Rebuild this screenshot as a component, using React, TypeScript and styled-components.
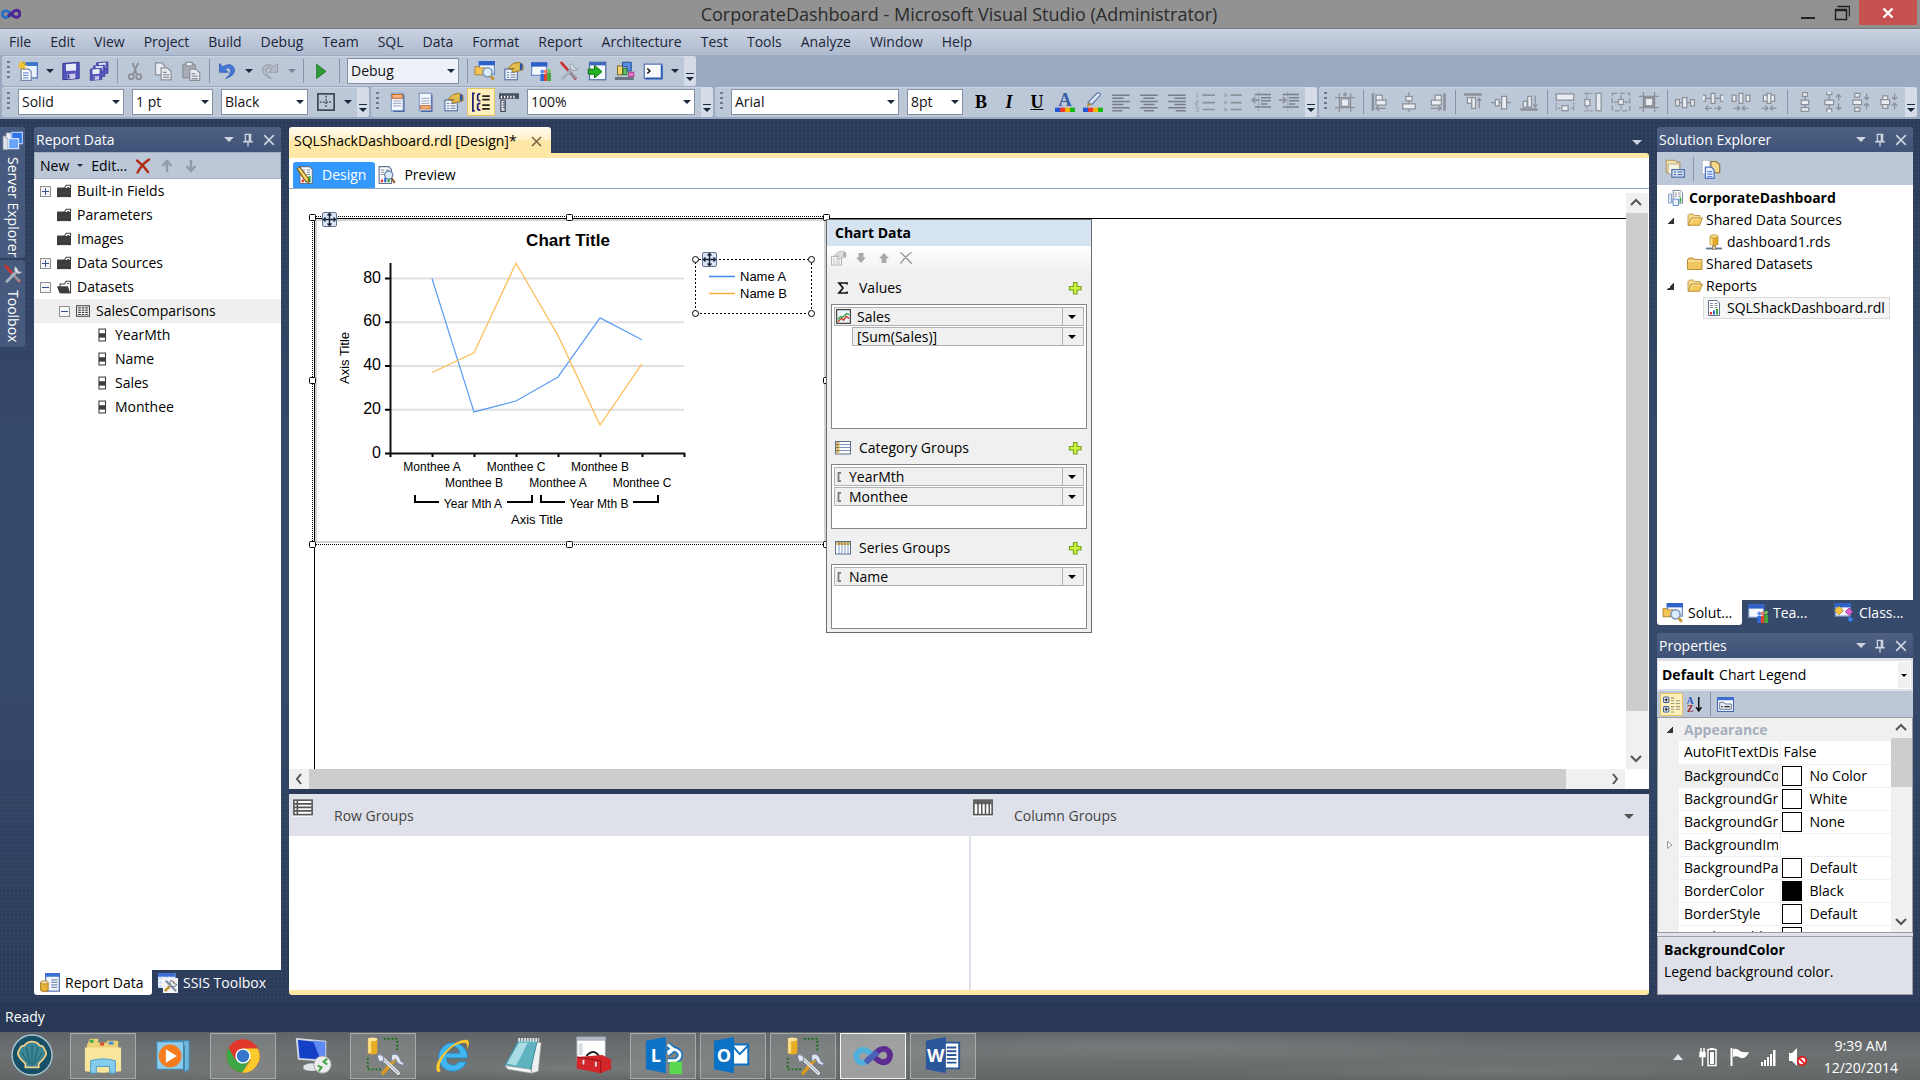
import React from "react";
import styled, { createGlobalStyle, css } from "styled-components";

const UI = `"Open Sans", "Noto Sans", sans-serif`;
const ARIAL = `"Liberation Sans", Arial, sans-serif`;

const Global = createGlobalStyle`
  * { box-sizing: border-box; }
  body { margin: 0; font-family: ${UI}; font-size: 14px; line-height: 20px; color: #000; }
  button, select, input { font: inherit; color: inherit; }
  button { border: 0; background: none; padding: 0; }
  ul { list-style: none; margin: 0; padding: 0; }
  svg { display: block; flex: none; }
`;

/* ---------- icons (16 unit grid) ---------- */

const G = "#8b9099";
const L = "#e9ecf1";

const windowShape = (
  <>
    <rect x="3.5" y="0.5" width="12" height="10" fill="#f4f8ff" stroke="#6f8fc6" />
    <rect x="3" y="0" width="13" height="3.5" fill="#2f62c9" />
  </>
);

const folderOpen = (
  <>
    <path d="M1 13V3.5L2.5 2h3.700L7.500 3.500H13V6" fill="#f3dc92" stroke="#b58c35" strokeWidth=".8" />
    <path d="M1 13.300 4.500 6h11L12.500 13.300z" fill="#f5c95c" stroke="#a97b21" strokeWidth=".8" />
    <path d="M3 12 5.500 7h8" fill="none" stroke="#fdeebb" strokeWidth=".8" />
  </>
);

const darkFolder = (
  <>
    <path d="M0 15V4h16v11z" fill="#3d3d3d" />
    <path d="M8.500 4.500 10.500 1.500h5v3" fill="#fff" stroke="#3d3d3d" strokeWidth="1.200" />
    <path d="M11.500 4h2.500" stroke="#3d3d3d" />
  </>
);

const crossedTools = (
  <>
    <path d="M2 1.500 13 14" stroke="#c33" strokeWidth="2.200" strokeLinecap="round" />
    <path d="M7 7.500 13.500 14" stroke="#8c94a2" strokeWidth="2" />
    <path d="M3 14 11 6" stroke="#a7afbb" strokeWidth="2.200" strokeLinecap="round" />
    <path d="M10 2a3.300 3.300 0 1 0 5 4.500L12.500 6 11.500 4z" fill="#dfe4ea" stroke="#8c94a2" strokeWidth=".7" />
  </>
);

const people = (
  <>
    <path d="M7.500 16v-5q1.500-2 3 0v5z" fill="#2f6be0" />
    <circle cx="9" cy="8.300" r="1.500" fill="#5b91f2" />
    <path d="M10.300 16v-5q1.500-2 3 0v5z" fill="#e2452f" />
    <circle cx="11.800" cy="8.300" r="1.500" fill="#f0705c" />
    <path d="M13 16v-6q1.500-2 3 0v6z" fill="#46a83b" />
    <circle cx="14.500" cy="7.600" r="1.400" fill="#6cc95d" />
  </>
);

const colorBars = (
  <>
    <rect x="0" y="12.500" width="4" height="3.500" fill="#2355d4" />
    <rect x="4" y="12.500" width="4" height="3.500" fill="#ee3a34" />
    <rect x="8" y="12.500" width="4" height="3.500" fill="#f6b400" />
    <rect x="12" y="12.500" width="4" height="3.500" fill="#13b813" />
  </>
);

const page = (
  <>
    <rect x="3.500" y="1" width="9.500" height="14" fill="#f6f9ff" stroke="#8aa0c8" />
    <path d="M5 5h6.500M5 7h6.500M5 9h6.500M5 11h6.500" stroke="#a9b4c9" />
    <path d="M13.500 2v13.500H5" fill="none" stroke="#4d689e" />
  </>
);

const floppy = (
  <>
    <path d="M1.500 2 14.500 1v13l-13 1z" fill="#5355bd" stroke="#33358f" strokeWidth=".8" />
    <path d="M4 2.500 12 2v5.500L4 8z" fill="#e9edf8" />
    <path d="M5 10.500 11.500 10v4L5 14.500z" fill="#c9cbe8" />
    <path d="M6 11v3" stroke="#33358f" strokeWidth="1.500" />
  </>
);

const reportPage = (
  <>
    <path d="M2.500.500h8.500L13.500 3v12.500h-11z" fill="#fff" stroke="#63738f" />
    <path d="M4 3.500h3M4 5.500h3M4 7.500h3M8.500 3.500h3M8.500 5.500h3M8.500 7.500h3" stroke="#7f8896" strokeWidth=".9" />
    <rect x="4" y="12" width="2" height="2.500" fill="#e33" />
    <rect x="7" y="10.500" width="2" height="4" fill="#2a62e0" />
    <rect x="10" y="9" width="2" height="5.500" fill="#2ca73a" />
  </>
);

const handCard = (
  <>
    <rect x="1.500" y="6.500" width="10" height="8.500" fill="#f5f8fd" stroke="#5e79a8" />
    <path d="M3 9h2M6 9h4M3 11h2M6 11h4M3 13h2M6 13h4" stroke="#7f92b4" />
    <path d="M4 6 8 2l5-1 3 2v4l-4 1-4 1-1-1.500L9 6z" fill="#e2bd4e" stroke="#a07922" strokeWidth=".8" />
    <path d="M14.500 2v5" stroke="#2a4fa8" strokeWidth="2" />
  </>
);

const icons: Record<string, React.ReactNode> = {
  newItem: (
    <>
      <rect x="4.500" y="1.500" width="11" height="12" fill="#eaf1fd" stroke="#5879b6" />
      <rect x="4" y="1" width="12" height="3" fill="#3c74cf" />
      <path d="M2.500 6.500h6L10.500 8.500v7h-8z" fill="#fff" stroke="#7588ab" />
      <path d="M4 9.500h4.500M4 11.500h4.500M4 13.500h4.500" stroke="#6d93d8" />
      <path d="M3.500 0v7M0 3.500h7M1 1l5 5M6 1 1 6" stroke="#f2c224" strokeWidth="1.200" />
    </>
  ),
  save: floppy,
  saveAll: (
    <>
      <g transform="translate(5 0) scale(.7)">{floppy}</g>
      <g transform="translate(2.500 2.500) scale(.7)">{floppy}</g>
      <g transform="translate(0 5) scale(.7)">{floppy}</g>
    </>
  ),
  cut: (
    <g stroke={G} fill="none" strokeWidth="1.500">
      <path d="M6 1.500 9.500 11M10.500 1.500 6.500 11" />
      <circle cx="5" cy="12.500" r="2" />
      <circle cx="11" cy="12.500" r="2" />
    </g>
  ),
  copy: (
    <g stroke={G} fill={L}>
      <path d="M2 1.500h5l2.500 2.500v7H2z" />
      <path d="M6.500 5.500h5l3 3v6.500h-8z" />
      <path d="M8 9h3M8 11h5M8 13h5" />
    </g>
  ),
  paste: (
    <g stroke={G} fill="#a6abb5">
      <rect x="1.500" y="2.500" width="10" height="11" rx="1" />
      <rect x="4" y="1" width="5" height="3" fill={L} />
      <path d="M7 6.500h5l3 3v6H7z" fill={L} />
      <path d="M8.500 10h3M8.500 12h5M8.500 14h5" />
    </g>
  ),
  undo: (
    <path d="M2 2v7h7L6.500 6.500Q10 4 11 7.500 11 11 7 14 14.500 11.500 14 6.500 12 .500 4.500 4.500z" fill="#4478d8" stroke="#2a58b0" strokeWidth=".6" />
  ),
  redo: (
    <path d="M14 2v7H7L9.500 6.500Q6 4 5 7.500 5 11 9 14 1.500 11.500 2 6.500 4 .500 11.500 4.500z" fill="#b4bac5" stroke={G} strokeWidth=".6" />
  ),
  play: <path d="M4.500 2.500 12 8.300 4.500 14z" fill="#2f9a35" stroke="#1c7423" strokeWidth=".6" />,
  find: (
    <>
      {windowShape}
      <path d="M0 4.500h3l1 1h4V11H0z" fill="#f3c557" stroke="#a97b21" strokeWidth=".7" />
      <circle cx="10" cy="9" r="3.700" fill="#d9ecfb" stroke="#7c93b5" strokeWidth="1.200" />
      <path d="M12.500 12 15 15" stroke="#c8963a" strokeWidth="2.200" />
    </>
  ),
  properties: handCard,
  propertiesGray: <g style={{ filter: "grayscale(1)" }} opacity=".5">{handCard}</g>,
  team: (
    <>
      <g transform="translate(-3 1)">{windowShape}</g>
      {people}
    </>
  ),
  tools: crossedTools,
  go: (
    <>
      <rect x="2" y="1" width="13" height="14" fill="#f4f7fc" stroke="#5670a8" />
      <rect x="2" y="1" width="13" height="2.500" fill="#3c68bf" />
      <path d="M1 6.500h5V3.500L12 8.500 6 13.500v-3H1z" fill="#23b123" stroke="#0e7210" strokeWidth=".8" />
    </>
  ),
  blocks: (
    <>
      <rect x="2" y="4" width="4" height="7" fill="#f0d473" stroke="#7c6a1d" strokeWidth=".8" />
      <path d="M6 1h7v7h-3.500V4.500H6z" fill="#5a8fe6" stroke="#274d95" strokeWidth=".8" />
      <rect x="6.500" y="6" width="3" height="5" fill="#64c46a" stroke="#2c7c31" strokeWidth=".8" />
      <rect x="11" y="9" width="4" height="3.500" fill="#e879cb" stroke="#a93c8c" strokeWidth=".8" />
      <path d="M0 14h15" stroke="#6b7485" strokeWidth="2.500" />
    </>
  ),
  command: (
    <>
      <rect x="1" y="2.500" width="14" height="11.500" fill="#f8fafe" stroke="#5b78b2" />
      <path d="M15 3v11H2" fill="none" stroke="#2f5fb5" strokeWidth="1.600" />
      <path d="M3.500 6 5.500 8 3.500 10" fill="none" stroke="#111" strokeWidth="1.200" />
    </>
  ),
  border: (
    <>
      <rect x="1.500" y="1.500" width="13" height="13" fill="none" stroke="#39404d" strokeWidth="1.300" />
      <path d="M8 3v10M3 8h10" stroke="#39404d" strokeDasharray="1.500 1" />
    </>
  ),
  pageHeader: (
    <>
      {page}
      <rect x="4" y="2" width="8.500" height="3" fill="#f8b684" stroke="#c96a24" strokeWidth=".8" />
    </>
  ),
  pageFooter: (
    <>
      {page}
      <rect x="4.500" y="11" width="7.500" height="2.500" fill="#f8b684" stroke="#c96a24" strokeWidth=".8" />
    </>
  ),
  grouping: (
    <g fill="none" stroke="#241f77" strokeWidth="1.400">
      <path d="M3 1H1.500v14H3" />
      <path d="M7.500 1.500Q4.500 1.500 5.500 4.500 4.500 7 7.500 7M7.500 9Q4.500 9 5.500 12 4.500 14.500 7.500 14.500" />
      <path d="M9 3.200h6M9 6h6M9 10.500h6M9 13.500h6" stroke="#222" />
    </g>
  ),
  ruler: (
    <>
      <rect x="0" y="1" width="16" height="4.500" fill="#4a515e" />
      <path d="M2 5V3M4.500 5V3M7 5V3M9.500 5V3M12 5V3" stroke="#fff" />
      <path d="M1.500 6.500h3.500v9H1.500z" fill="#e6e9ef" stroke="#4a515e" />
      <path d="M3 8.500h2M3 10.500h2M3 12.500h2" stroke="#4a515e" />
    </>
  ),
  foreColor: (
    <>
      <text x="8" y="11.500" textAnchor="middle" fontFamily="Liberation Serif, serif" fontWeight="700" fontSize="15" fill="#3d5fa8">A</text>
      {colorBars}
    </>
  ),
  backColor: (
    <>
      <path d="M4 8.500 11 1q3-1 3 1.500L7 10z" fill="#dbe5f5" stroke="#5d78a8" strokeWidth=".9" />
      <path d="M4 8.500 7 10 3 11.700z" fill="#b88a2c" />
      {colorBars}
    </>
  ),
  alignLeft: <path d="M1 2.500h14M1 5h9M1 7.500h14M1 10h9M1 12.500h14M1 15h8" stroke="#777d87" strokeWidth="1.200" />,
  alignCenter: <path d="M1 2.500h14M3.500 5h9M1 7.500h14M3.500 10h9M1 12.500h14M4 15h8" stroke="#777d87" strokeWidth="1.200" />,
  alignRight: <path d="M1 2.500h14M6 5h9M1 7.500h14M6 10h9M1 12.500h14M7 15h8" stroke="#777d87" strokeWidth="1.200" />,
  numbered: (
    <>
      <path d="M6 2.500h10M6 8.500h10M6 14h10" stroke={G} strokeWidth="1.300" />
      <path d="M2 .500v4M.500 7h2v1.500h-2V10h2M.500 12h2v3.500h-2M1 13.700h1.500" stroke="#a5aab3" fill="none" />
    </>
  ),
  bullets: (
    <>
      <path d="M6 2.500h9M6 8.500h9M6 14h9" stroke={G} strokeWidth="1.300" />
      <g fill="#a5aab3"><circle cx="2" cy="2.500" r="1.500" /><circle cx="2" cy="8.500" r="1.500" /><circle cx="2" cy="14" r="1.500" /></g>
    </>
  ),
  outdent: (
    <>
      <path d="M3 2h13M8 4.500h8M8 7h8M8 9.500h5M3 12h13" stroke="#7b818c" strokeWidth="1.200" />
      <path d="M7 6.500H1.500M3.500 4 1 6.500 3.500 9" stroke={G} fill="none" strokeWidth="1.400" />
      <path d="M6 0v16" stroke={G} strokeDasharray="1 1" />
    </>
  ),
  indent: (
    <>
      <path d="M3 2h13M8 4.500h8M8 7h8M8 9.500h5M3 12h13" stroke="#7b818c" strokeWidth="1.200" />
      <path d="M0 6.500h5M3 4l2.500 2.500L3 9" stroke={G} fill="none" strokeWidth="1.400" />
      <path d="M7 0v16" stroke={G} strokeDasharray="1 1" />
    </>
  ),
  grid: (
    <g stroke={G} fill={L}>
      <path d="M3.500 1v15M12.500 1v15M0 4.500h16M0 12.500h16" />
      <rect x="5" y="5.500" width="6" height="6" />
      <path d="M8 0v3M6.500 1.500 8 3l1.500-1.500" fill="none" />
    </g>
  ),
  lefts: (
    <g stroke={G} fill={L}>
      <path d="M1.500 1v14" strokeWidth="2" />
      <path d="M4 2.500h5v4H4zM4 6.500h8v4H4z" />
      <path d="M12 13H4M6.500 11 4 13l2.500 2" fill="none" />
    </g>
  ),
  centers: (
    <g stroke={G} fill={L}>
      <path d="M8 0v16" />
      <path d="M5.500 3.500h5v3.500h-5zM3 9.500h10v4H3z" />
    </g>
  ),
  rights: (
    <g stroke={G} fill={L}>
      <path d="M14 1v14" strokeWidth="2" />
      <path d="M6.500 2.500h5v4h-5zM3.500 6.500h8v4h-8z" />
      <path d="M3 13h8M9 11l2.500 2L9 15" fill="none" />
    </g>
  ),
  tops: (
    <g stroke={G} fill={L}>
      <path d="M1 2h14" strokeWidth="2" />
      <path d="M3.500 4.500h3.500V9H3.500zM7 4.500h3V13H7z" />
      <path d="M13 13V5M11.500 7 13 5l1.500 2" fill="none" />
    </g>
  ),
  middles: (
    <g stroke={G} fill={L}>
      <path d="M0 8.500h16" />
      <path d="M3.500 6h3v5h-3zM8.500 3.500h4v10h-4z" />
    </g>
  ),
  bottoms: (
    <g stroke={G} fill={L}>
      <path d="M1 14h14" strokeWidth="2" />
      <path d="M3.500 7.500h3v4.500h-3zM7 3.500h3V12H7z" />
      <path d="M13 3v9M11.500 10l1.500 2 1.500-2" fill="none" />
    </g>
  ),
  sameWidth: (
    <g stroke={G} fill={L}>
      <rect x="1" y="1.500" width="14" height="5" />
      <rect x="5.500" y="11" width="5" height="4" />
      <path d="M4 13H1M15 13h-3M1 8.500v6M15 8.500v6" strokeDasharray="1.500 1" />
    </g>
  ),
  sameHeight: (
    <g stroke={G} fill={L}>
      <rect x="10.500" y="1" width="4" height="14" />
      <rect x="1.500" y="6" width="4" height="5" />
      <path d="M3 1v4M3 12v3M1 1h8M1 15h8" strokeDasharray="1.500 1" />
    </g>
  ),
  sameSize: (
    <g stroke={G} fill={L}>
      <rect x="1" y="1" width="14" height="14" fill="none" strokeDasharray="4 2" />
      <rect x="6" y="6" width="4" height="4" />
      <path d="M8 2.500v3M8 11v3M2.500 8h3M11 8h3" />
    </g>
  ),
  sizeGrid: (
    <g stroke={G} fill={L}>
      <path d="M3.500 0v16M12.500 0v16M0 3.500h16M0 12.500h16" />
      <rect x="4.500" y="4.500" width="7" height="7" strokeWidth="2" />
    </g>
  ),
  hEqual: (
    <g stroke={G} fill={L}>
      <path d="M0 8.500h16" />
      <path d="M.500 6h3v5h-3zM6 4.500h3.500v8H6zM12.500 6h3v5h-3z" />
    </g>
  ),
  hMore: (
    <g stroke={G} fill={L}>
      <path d="M0 2.500h2v5H0M6.500 1h3v8h-3zM16 2.500h-2v5h2M2 5h4M10 5h4" />
      <path d="M7 13H2M4 11l-2 2 2 2M9 13h5M12 11l2 2-2 2" fill="none" />
    </g>
  ),
  hLess: (
    <g stroke={G} fill={L}>
      <path d="M1 2.500h3v5H1zM6.500 1h3v8h-3zM12 2.500h3v5h-3z" />
      <path d="M2 13h5M5 11l2 2-2 2M14 13H9M11 11l-2 2 2 2" fill="none" />
    </g>
  ),
  hNone: (
    <g stroke={G} fill={L}>
      <path d="M3.500 2.500h3v5h-3zM6.500 1h3v8h-3zM9.500 2.500h3v5h-3z" />
      <path d="M2 13h5M5 11l2 2-2 2M14 13H9M11 11l-2 2 2 2" fill="none" />
    </g>
  ),
  vEqual: (
    <g stroke={G} fill={L}>
      <path d="M8 0v16" />
      <path d="M6 .500h4v3H6zM5 6.500h6v3.500H5zM5 12.500h6v3H5z" />
    </g>
  ),
  vMore: (
    <g stroke={G} fill={L}>
      <path d="M3 0v2h4V0M1.500 6.500h7V10h-7zM3 16v-2.500h4V16M5 2v4M5 10v3" />
      <path d="M12.500 7V2M10.500 4l2-2 2 2M12.500 9v5M10.500 12l2 2 2-2" fill="none" />
    </g>
  ),
  vLess: (
    <g stroke={G} fill={L}>
      <path d="M3 1h4v3H3zM1.500 6.500h7V10h-7zM3 12.500h4v3H3z" />
      <path d="M12.500 1v5M10.500 4l2 2 2-2M12.500 14V9M10.500 11l2-2 2 2" fill="none" />
    </g>
  ),
  vNone: (
    <g stroke={G} fill={L}>
      <path d="M3 3h4v3H3zM1.500 6h7v4h-7zM3 10h4v3H3z" />
      <path d="M12.500 1v5M10.500 4l2 2 2-2M12.500 14V9M10.500 11l2-2 2 2" fill="none" />
    </g>
  ),
  servers: (
    <>
      <path d="M0 4h4v11H0z" fill="#dfe3ea" stroke="#8691a5" strokeWidth=".6" />
      <path d="M2.500 1.500h4V6h-4z" fill="#eef1f5" stroke="#8691a5" strokeWidth=".6" />
      <path d="M7 1h8.500v9H7z" fill="#2f74e6" stroke="#a9c6ff" />
      <path d="M4.500 6h8v8h-8z" fill="#6aa2f7" stroke="#d4e3ff" />
    </>
  ),
  folder: darkFolder,
  folderOpenDark: (
    <>
      <path d="M3.500 7V4.500H8.500L10.500 1.500h5v13H5" fill="#fff" stroke="#3d3d3d" strokeWidth="1.200" />
      <path d="M0 7h12.500l2.500 8H3z" fill="#3d3d3d" />
      <path d="M11.500 4h2.500" stroke="#3d3d3d" />
    </>
  ),
  dataset: (
    <>
      <rect x=".7" y="2" width="14.600" height="12" fill="#fff" stroke="#3d3d3d" strokeWidth="1.200" />
      <path d="M2.500 4.500h11M2.500 7h11M2.500 9.500h11M2.500 12h11" stroke="#3d3d3d" strokeWidth="1.300" strokeDasharray="3 1" />
    </>
  ),
  field: (
    <>
      <rect x="4.500" y="1.200" width="7.500" height="13.600" fill="#fff" stroke="#3d3d3d" strokeWidth="1.200" />
      <rect x="4.500" y="6" width="7.500" height="5" fill="#3d3d3d" />
    </>
  ),
  delete: <path d="M2 2.500Q8 7 13 14M14 1.500Q7 6 2.500 14.500" stroke="#b02a14" strokeWidth="2.400" fill="none" strokeLinecap="round" />,
  deleteGray: <path d="M2 2Q8 7 14 14M14 2Q7 6 2 14" stroke="#9a9a9a" strokeWidth="1.600" fill="none" strokeLinecap="round" />,
  up: <path d="M8 14V4M3.500 8 8 3l4.500 5" stroke="#929aa6" strokeWidth="2.400" fill="none" />,
  down: <path d="M8 2v10M3.500 8 8 13l4.500-5" stroke="#929aa6" strokeWidth="2.400" fill="none" />,
  upFat: <path d="M8 3 13 8.500h-2.500V13h-5V8.500H3z" fill="#a9a9a9" />,
  downFat: <path d="M8 13 13 7.500h-2.500V3h-5v4.500H3z" fill="#a9a9a9" />,
  design: (
    <>
      <g transform="translate(1 0)">{reportPage}</g>
      <path d="M1 2.500 3.500 1 11 11l.500 4-3.500-2z" fill="#eebb3e" stroke="#7c5a12" strokeWidth=".9" />
      <path d="M2.500 2 10 12.500" stroke="#fbe49c" />
    </>
  ),
  preview: (
    <>
      <g transform="translate(-1.500 0)">{reportPage}</g>
      <circle cx="9.500" cy="8" r="3.600" fill="#dceefb" stroke="#6f87ac" strokeWidth="1.200" />
      <path d="M12 11 15 15" stroke="#8d5f39" strokeWidth="2" />
    </>
  ),
  reportData: (
    <>
      <rect x="4.500" y=".5" width="11" height="14" fill="#f2f6fd" stroke="#5d79b1" />
      <rect x="4" y="0" width="12" height="3" fill="#3b6fd4" />
      <path d="M9 5.500h5M9 7.500h5M9 9.500h5M9 11.500h5" stroke="#7a8db3" />
      <path d="M.500 7.500v6.500q3 2 6 0V7.500z" fill="#eab43b" stroke="#9a6d14" strokeWidth=".7" />
      <ellipse cx="3.500" cy="7.500" rx="3" ry="1.300" fill="#fbe4a4" stroke="#9a6d14" strokeWidth=".6" />
    </>
  ),
  ssis: (
    <>
      <rect x="0" y="0" width="14" height="12" fill="#cfe0f8" />
      <rect x="0" y="0" width="14" height="3" fill="#3b6fd4" />
      <path d="M0 6h14M0 9h14M4 3v9M9 3v9" stroke="#fff" />
      <g transform="translate(4 4) scale(.75)">
        <rect x="0" y="0" width="16" height="16" fill="#f2f4f8" />
        <path d="M2 14 12 4" stroke="#c89438" strokeWidth="3" />
        <path d="M3 3 14 14" stroke="#aab2c0" strokeWidth="3" />
        <path d="M3 3 14 14" stroke="#68717f" strokeWidth="1" />
        <path d="M9 2a4 4 0 1 0 6 5L12 6z" fill="#e7eaee" stroke="#68717f" />
      </g>
    </>
  ),
  classView: (
    <>
      <g transform="translate(-2.500 0)">{windowShape}</g>
      <path d="M4 2.500 7.500 6 4 9.500.500 6z" fill="#f6c545" stroke="#a97b21" strokeWidth=".6" />
      <path d="M12 4l3 3-3 3-3-3z" fill="#dd63cf" stroke="#97328b" strokeWidth=".6" />
      <path d="M13 10.500 15.500 13 13 15.500 10.500 13z" fill="#3f7fe8" stroke="#234f9f" strokeWidth=".6" />
    </>
  ),
  showAll: (
    <>
      <path d="M1 1h7l1 1.500h3V11H1z" fill="#f2e3b0" stroke="#a88d4d" strokeWidth=".7" />
      <path d="M2.500 4h9v8h-9z" fill="#f7f3e3" stroke="#a39a7d" strokeWidth=".6" />
      <rect x="5.500" y="8.500" width="10" height="6" fill="#e7effc" stroke="#4d6da8" />
      <path d="M7 10.500h2M10 10.500h4M7 12.500h2M10 12.500h4" stroke="#4d6da8" />
    </>
  ),
  refresh: (
    <>
      <path d="M1 1h6v11H1z" fill="#fff" stroke="#9aa3b3" strokeDasharray="1 1" />
      <path d="M8 2h4l3 2.500V11H8z" fill="#f3d88b" stroke="#8d743a" strokeWidth=".9" />
      <path d="M3.500 6.500h5L10.500 9v6.500h-7z" fill="#e7effc" stroke="#4f74c4" />
      <path d="M5 10h4M5 12h4M5 14h4" stroke="#5c86dd" />
    </>
  ),
  solution: (
    <>
      <g transform="translate(3 0) scale(.85)">{reportPage}</g>
      <path d="M.500 4h3v9h-3z" fill="#dbe9f8" stroke="#5f86b4" strokeWidth=".7" />
      <path d="M5 9h4l1.500 1.500V15.500H5z" fill="#e7effc" stroke="#4f74c4" strokeWidth=".8" />
    </>
  ),
  folderOpen,
  folderClosed: (
    <>
      <path d="M.500 13.500V3.500L2 2h4l1.500 1.500h7.500v10z" fill="#f2c65e" stroke="#a97b21" strokeWidth=".8" />
      <path d="M1 5h13.500" stroke="#fdf0c2" />
    </>
  ),
  dataSource: (
    <>
      <path d="M4 2.500v8q4 2.500 8 0v-8z" fill="#e5ab28" stroke="#a3731a" strokeWidth=".6" />
      <path d="M5.500 4v7.500" stroke="#fbe09a" strokeWidth="2" />
      <ellipse cx="8" cy="2.500" rx="4" ry="1.700" fill="#fbdc86" stroke="#a3731a" strokeWidth=".6" />
      <path d="M0 14.500h16" stroke="#5f7391" strokeWidth="1.800" />
      <rect x="6.500" y="12" width="3" height="3.500" fill="#f2c65e" stroke="#5f7391" strokeWidth=".6" />
    </>
  ),
  report: reportPage,
  categorized: (
    <>
      <g fill="#fff" stroke="#3a5b9e"><rect x=".5" y="1" width="5" height="5" rx="1" /><rect x=".5" y="10" width="5" height="5" rx="1" /></g>
      <path d="M1.500 3.500h3M3 2v3M1.500 12.500h3M3 11v3" stroke="#111" />
      <path d="M7.500 2h3M7.500 4.500h3M7.500 7h3M7.500 10h3M7.500 12.500h3M7.500 15h3M12 4.500h4M12 7h4M12 10h4M12 12.500h4" stroke="#9a9a86" />
    </>
  ),
  sortAz: (
    <>
      <text x="4" y="7.500" textAnchor="middle" fontFamily="Liberation Serif, serif" fontWeight="700" fontSize="9" fill="#2c55b8">A</text>
      <text x="4" y="15.500" textAnchor="middle" fontFamily="Liberation Serif, serif" fontWeight="700" fontSize="9" fill="#a32222">Z</text>
      <path d="M12 1v12M9.500 10.500 12 14l2.500-3.500" stroke="#111" strokeWidth="1.400" fill="none" />
    </>
  ),
  propertyPages: (
    <>
      <rect x=".5" y="1.500" width="15" height="13" fill="#fff" stroke="#3c62b0" />
      <rect x="0" y="1" width="16" height="3" fill="#3c6fd2" />
      <path d="M2.500 6h4l1 1.500h6V12.500h-11z" fill="#e9eff9" stroke="#4b5f86" strokeWidth=".8" />
      <path d="M4 10h1.500M7 10h5" stroke="#222" />
    </>
  ),
  sigma: <path d="M12 4.500V3H4l4 5-4 5h8v-1.500" fill="none" stroke="#111" strokeWidth="1.700" />,
  categories: (
    <>
      <rect x=".5" y="1.500" width="15" height="12.500" fill="#fff" stroke="#5b6e8c" />
      <rect x="1" y="2" width="3.500" height="11.500" fill="#dcc078" />
      <path d="M1 4.500h3.500M1 7.500h3.500M1 10.500h3.500" stroke="#8d7536" />
      <path d="M5 4.500h10M5 7.500h10M5 10.500h10" stroke="#7897c8" />
    </>
  ),
  series: (
    <>
      <rect x=".5" y="1.500" width="15" height="12.500" fill="#fff" stroke="#5b6e8c" />
      <rect x="1" y="2" width="14" height="3" fill="#dcc078" />
      <path d="M4 2v3M7 2v3M10 2v3M13 2v3" stroke="#8d7536" />
      <path d="M4 5v9M7 5v9M10 5v9M13 5v9" stroke="#7897c8" />
    </>
  ),
  add: <path d="M6.500 2.500h3.500v4h4V10h-4v4H6.500v-4h-4V6.500h4z" fill="#cdf53c" stroke="#74a51a" strokeWidth="1.200" />,
  lineChart: (
    <>
      <rect x=".7" y=".7" width="14.600" height="14.600" fill="#eaf6fc" stroke="#333" strokeWidth="1.200" />
      <path d="M2 11 5 8l2 1 4-4 3 1" stroke="#2f9f38" strokeWidth="1.400" fill="none" />
      <path d="M2 13.500 6 10l2 2 3-4 3 2" stroke="#cf3b22" strokeWidth="1.400" fill="none" />
    </>
  ),
  bracket: <path d="M8 1.500H4v13h4" fill="none" stroke="#777" strokeWidth="2.800" />,
  rowGroups: (
    <>
      <rect x="0" y="1" width="16" height="14" fill="#fff" />
      <rect x=".7" y="1.700" width="14.600" height="11.600" fill="#fff" stroke="#555" strokeWidth="1.300" />
      <path d="M3.500 2v11M1 4.700h14M1 7.500h14M1 10.300h14" stroke="#555" strokeWidth="1.300" />
    </>
  ),
  columnGroups: (
    <>
      <rect x="0" y="1" width="16" height="14" fill="#fff" />
      <rect x=".7" y="1.700" width="14.600" height="11.600" fill="#fff" stroke="#555" strokeWidth="1.300" />
      <rect x="1" y="2" width="14" height="3" fill="#666" />
      <path d="M4 2v11M7 2v11M10 2v11M13 2v11" stroke="#555" strokeWidth="1.200" />
    </>
  ),
  pin: <path d="M5 1.500h6v8H5zM9.500 2v7M2.500 10h11M8 10v5.500" fill="none" stroke="#ced4df" strokeWidth="1.500" />,
  close: <path d="M2.500 2.500l11 11M13.500 2.500l-11 11" stroke="currentColor" strokeWidth="1.900" />,
};

type IconProps = { name: string; size?: number };
const Icon = ({ name, size = 20 }: IconProps) => (
  <svg width={size} height={size} viewBox="0 0 16 16" overflow="visible" aria-hidden="true">{icons[name]}</svg>
);

const Triangle = styled.span<{ $color?: string; $size?: number }>`
  display: block;
  flex: none;
  border: ${(p) => p.$size ?? 4}px solid transparent;
  border-top-color: ${(p) => p.$color ?? "#1b293e"};
  border-bottom-width: 0;
`;

/* ---------- window chrome ---------- */

const Window = styled.div`
  min-height: 100vh;
  display: flex;
  flex-direction: column;
  background: #293955;
`;

const TitleBar = styled.header`
  height: 29px;
  display: grid;
  grid-template-columns: 1fr auto 1fr;
  align-items: center;
  background: #929292;
  border-bottom: 1px solid #7b7b7b;
  padding: 0 3px 0 1px;
`;
const WindowTitle = styled.h1`
  margin: 0;
  font-size: 18px;
  line-height: 28px;
  font-weight: 400;
  color: #2b2b2b;
`;
const WindowButtons = styled.div`
  display: flex;
  justify-content: flex-end;
  align-self: start;
`;
const WindowButton = styled.button<{ $close?: boolean }>`
  width: ${(p) => (p.$close ? 58 : 34)}px;
  height: 25px;
  display: grid;
  place-items: center;
  background: ${(p) => (p.$close ? "#c75050" : "transparent")};
`;

const MenuBar = styled.nav`
  height: 26px;
  display: flex;
  align-items: center;
  gap: 1px;
  background: linear-gradient(#cad3e2, #aebace);
`;
const MenuItem = styled.button`
  padding: 0 9px;
  color: #1b2638;
`;

const ToolStrip = styled.div`
  background: #9caac1;
  padding: 1px 2px 2px;
  display: flex;
  flex-direction: column;
  gap: 1px;
`;
const ToolRow = styled.div`
  display: flex;
  gap: 2px;
`;
const Bar = styled.div`
  height: 30px;
  display: flex;
  align-items: center;
  background: #bcc7d8;
  border-radius: 3px;
  box-shadow: inset 0 1px #ccd5e3;
  overflow: hidden;
`;
const Grip = styled.span`
  width: 3px;
  height: 20px;
  margin: 0 4px 0 5px;
  background: repeating-linear-gradient(#6b7a93 0 2px, transparent 2px 5px);
`;
const ToolButton = styled.button<{ $on?: boolean; $compact?: boolean }>`
  width: ${(p) => (p.$compact ? 23 : 28)}px;
  height: ${(p) => (p.$compact ? 23 : 28)}px;
  flex: none;
  display: grid;
  place-items: center;
  ${(p) => p.$on && css`background: #ffefbb; border: 1px solid #e5c365;`}
`;
const DropButton = styled.button`
  width: 15px;
  height: 28px;
  display: grid;
  place-items: center;
`;
const Letter = styled.span<{ $kind: "b" | "i" | "u" }>`
  font-family: "Liberation Serif", serif;
  font-weight: 700;
  font-size: 18px;
  font-style: ${(p) => (p.$kind === "i" ? "italic" : "normal")};
  text-decoration: ${(p) => (p.$kind === "u" ? "underline" : "none")};
`;
const Separator = styled.span`
  width: 1px;
  height: 24px;
  margin: 0 3px 0 4px;
  background: #8592a8;
`;
const Overflow = styled.button`
  width: 12px;
  height: 30px;
  margin-left: 2px;
  padding-bottom: 5px;
  background: #d5dbe7;
  display: flex;
  flex-direction: column;
  align-items: center;
  justify-content: flex-end;
  gap: 3px;
  &::before { content: ""; width: 8px; height: 1px; background: #1b293e; }
`;
const ComboBox = styled.span<{ $width: number; $tint?: boolean }>`
  position: relative;
  width: ${(p) => p.$width}px;
  height: 26px;
  margin: 0 4px;
  flex: none;
  & > select {
    appearance: none;
    display: block;
    width: 100%;
    height: 100%;
    padding: 0 16px 0 3px;
    border: 1px solid #8591a2;
    border-radius: 0;
    background: ${(p) => (p.$tint ? "#eef1f7" : "#fff")};
    color: #111;
  }
  & > span { position: absolute; right: 4px; top: 11px; pointer-events: none; }
`;

const Combo = ({ label, value, width, tint }: { label: string; value: string; width: number; tint?: boolean }) => (
  <ComboBox $width={width} $tint={tint}>
    <select aria-label={label} defaultValue={value}><option>{value}</option></select>
    <Triangle />
  </ComboBox>
);

const Tools = ({ names }: { names: string[] }) => (
  <>
    {names.map((n) => (
      <ToolButton key={n} aria-label={n}><Icon name={n} /></ToolButton>
    ))}
  </>
);
const Drop = ({ label, dim }: { label: string; dim?: boolean }) => (
  <DropButton aria-label={label}><Triangle $color={dim ? "#7b8799" : undefined} /></DropButton>
);
const More = () => <Overflow aria-label="Toolbar options"><Triangle /></Overflow>;

/* ---------- docking area ---------- */

const Dock = styled.main`
  flex: 1;
  display: grid;
  grid-template-columns: 26px 247px minmax(0, 1fr) 256px;
  column-gap: 8px;
  padding: 8px 7px 7px 0;
  background:
    radial-gradient(circle, #3d517455 1px, transparent 1px) 0 0 / 4px 4px,
    linear-gradient(#2b3b59, #35496a 40%, #35496a 60%, #2b3b59);
`;
const SideTabs = styled.div`
  display: flex;
  flex-direction: column;
  gap: 2px;
`;
const SideTab = styled.button<{ $height: number }>`
  height: ${(p) => p.$height}px;
  width: 25px;
  padding-top: 4px;
  display: flex;
  flex-direction: column;
  align-items: center;
  gap: 6px;
  background: #465a7d;
  border-radius: 0 3px 3px 0;
  color: #fff;
  & > span { writing-mode: vertical-rl; line-height: 20px; }
`;
const Column = styled.div`
  display: flex;
  flex-direction: column;
  min-width: 0;
`;
const Panel = styled.section<{ $height?: number }>`
  display: flex;
  flex-direction: column;
  min-height: 0;
  ${(p) => (p.$height ? css`flex: none; height: ${p.$height}px; margin-top: 8px;` : css`flex: 1;`)}
`;
const PanelHeader = styled.header`
  height: 25px;
  flex: none;
  display: flex;
  align-items: center;
  gap: 7px;
  padding: 0 5px 0 2px;
  color: #fff;
  background: linear-gradient(#4d6082, #3f5378);
  border-radius: 3px 3px 0 0;
`;
const PanelTitle = styled.h2`
  flex: 1;
  margin: 0;
  font-size: 14px;
  font-weight: 400;
`;
const HeaderButton = styled.button`
  color: #ced4df;
`;
const PanelBody = styled.div`
  flex: 1;
  min-height: 0;
  background: #fff;
`;
const PanelBar = styled.div<{ $height: number }>`
  height: ${(p) => p.$height}px;
  flex: none;
  display: flex;
  align-items: center;
  background: #bcc7d8;
  padding-left: 4px;
`;
const ReportBar = styled(PanelBar)`
  border: 1px solid #a3afc1;
  padding-left: 5px;
  gap: 8px;
`;
const TextButton = styled.button`
  display: flex;
  align-items: center;
  gap: 8px;
`;
const BottomTabs = styled.div`
  height: 25px;
  flex: none;
  display: flex;
`;
const BottomTab = styled.button<{ $active?: boolean; $width?: number }>`
  ${(p) => p.$width && css`width: ${p.$width}px;`}
  display: flex;
  align-items: center;
  gap: 5px;
  padding: 0 4px 0 6px;
  border-radius: 0 0 3px 3px;
  white-space: nowrap;
  background: ${(p) => (p.$active ? "#fff" : "transparent")};
  color: ${(p) => (p.$active ? "#000" : "#fff")};
`;

const Header = ({ title }: { title: string }) => (
  <PanelHeader>
    <PanelTitle>{title}</PanelTitle>
    <HeaderButton aria-label="Window position"><Triangle $color="#ced4df" $size={5} /></HeaderButton>
    <HeaderButton aria-label="Auto hide"><Icon name="pin" size={14} /></HeaderButton>
    <HeaderButton aria-label="Close"><Icon name="close" size={14} /></HeaderButton>
  </PanelHeader>
);

/* ---------- report data tree ---------- */

const DataTree = styled.ul``;
const DataRow = styled.li<{ $indent: number; $selected?: boolean }>`
  height: 24px;
  display: flex;
  align-items: center;
  gap: 6px;
  padding-left: ${(p) => p.$indent}px;
  background: ${(p) => (p.$selected ? "#efefef" : "transparent")};
`;
const Expander = styled.span<{ $state?: "plus" | "minus" }>`
  width: 11px;
  height: 11px;
  ${(p) =>
    p.$state &&
    css`
      border: 1px solid #8e8f8f;
      background:
        linear-gradient(#33508f, #33508f) center / 7px 1px no-repeat,
        ${p.$state === "plus" ? "linear-gradient(#33508f, #33508f) center / 1px 7px no-repeat," : ""}
        #f6f6f6;
    `}
`;
type DataNode = { text: string; icon: string; indent: number; state?: "plus" | "minus"; selected?: boolean };
const dataNodes: DataNode[] = [
  { text: "Built-in Fields", icon: "folder", indent: 6, state: "plus" },
  { text: "Parameters", icon: "folder", indent: 6 },
  { text: "Images", icon: "folder", indent: 6 },
  { text: "Data Sources", icon: "folder", indent: 6, state: "plus" },
  { text: "Datasets", icon: "folderOpenDark", indent: 6, state: "minus" },
  { text: "SalesComparisons", icon: "dataset", indent: 25, state: "minus", selected: true },
  { text: "YearMth", icon: "field", indent: 44 },
  { text: "Name", icon: "field", indent: 44 },
  { text: "Sales", icon: "field", indent: 44 },
  { text: "Monthee", icon: "field", indent: 44 },
];

/* ---------- document ---------- */

const TabStrip = styled.div`
  height: 26px;
  display: flex;
  justify-content: space-between;
  align-items: stretch;
  padding-right: 7px;
`;
const DocumentTab = styled.div`
  display: flex;
  align-items: center;
  gap: 13px;
  padding: 2px 8px 0 5px;
  background: linear-gradient(#fffcf2, #fff0c4 50%, #ffe8a6 51%);
  border-radius: 3px 3px 0 0;
`;
const TabClose = styled.button`color: #75633d;`;
const StripMenu = styled.button`padding-top: 4px;`;
const DocumentPane = styled.div`
  flex: 1;
  min-height: 0;
  display: flex;
  flex-direction: column;
  border: solid #ffe8a6;
  border-width: 5px 0;
  border-radius: 0 3px 3px 3px;
  background: #fff;
`;
const ViewTabs = styled.div`
  height: 31px;
  flex: none;
  display: flex;
  align-items: flex-end;
  padding-left: 4px;
  border-bottom: 1px solid #9aaabd;
`;
const ViewTab = styled.button<{ $active?: boolean }>`
  height: 26px;
  display: flex;
  align-items: center;
  gap: 8px;
  padding: 0 9px 0 3px;
  border-radius: 3px 3px 0 0;
  background: ${(p) => (p.$active ? "#3399ff" : "transparent")};
  color: ${(p) => (p.$active ? "#fff" : "#000")};
`;
const CanvasRow = styled.div`
  flex: 1;
  min-height: 0;
  display: flex;
`;
const Canvas = styled.div`
  flex: 1;
  min-width: 0;
  padding: 29px 0 0 25px;
  display: flex;
  overflow: hidden;
`;
const ReportSurface = styled.div`
  flex: 1;
  display: flex;
  align-items: flex-start;
  border: solid #000;
  border-width: 1px 0 0 1px;
`;
const ScrollColumn = styled.div<{ $width: number }>`
  width: ${(p) => p.$width}px;
  flex: none;
  display: flex;
  flex-direction: column;
  background: #f0f0f0;
`;
const CanvasScroll = styled(ScrollColumn)`margin: 4px 1px 0 0;`;
const ScrollRow = styled.div`
  height: 20px;
  flex: none;
  display: flex;
  margin-right: 24px;
  background: #f0f0f0;
`;
const ScrollButton = styled.button`
  width: 20px;
  height: 20px;
  flex: none;
  display: grid;
  place-items: center;
`;
const Thumb = styled.div<{ $share: number }>`
  flex: ${(p) => p.$share} 0 0;
  background: #cdcdcd;
`;
const Track = styled.div<{ $share: number }>`flex: ${(p) => p.$share} 0 0;`;

const chevrons = { up: "M1 8 6 3l5 5", down: "M1 3l5 5 5-5", left: "M8 1 4 6l4 5", right: "M4 1l4 5-4 5" };
const Chevron = ({ dir }: { dir: keyof typeof chevrons }) => (
  <ScrollButton aria-label={`Scroll ${dir}`}>
    <svg width="12" height="12" viewBox="0 0 12 12"><path d={chevrons[dir]} fill="none" stroke="#555" strokeWidth="2" /></svg>
  </ScrollButton>
);

/* ---------- chart ---------- */

const ChartSvg = styled.svg`
  overflow: visible;
  font-family: ${ARIAL};
`;
const px = (i: number) => 432 + i * 42;
const py = (v: number) => 453.5 - v * 2.1875;
const seriesA = [80, 19, 24, 35, 62, 52];
const seriesB = [37, 46, 87, 54, 13, 41];
const toPoints = (s: number[]) => s.map((v, i) => `${px(i)},${py(v)}`).join(" ");
const months = ["Monthee A", "Monthee B", "Monthee C", "Monthee A", "Monthee B", "Monthee C"];

const MoveGlyph = ({ x, y }: { x: number; y: number }) => (
  <g transform={`translate(${x} ${y})`}>
    <rect x="-7" y="-7" width="14" height="14" rx="1.500" fill="#dbe4f3" stroke="#5f7294" />
    <path d="M0-6V6M-6 0H6M-2-4 0-6 2-4M-2 4 0 6 2 4M-4-2-6 0-4 2M4-2 6 0 4 2" stroke="#16233c" strokeWidth="1.400" fill="none" />
  </g>
);

const Chart = () => (
  <ChartSvg width="511" height="325" viewBox="315 219 511 325" role="img" aria-label="Chart Title">
    <rect x="316" y="220" width="509" height="322" fill="#fff" stroke="#d3d3d3" strokeWidth="2" />
    <rect x="312.500" y="216.500" width="514" height="328" fill="none" stroke="#000" strokeDasharray="1 1" strokeDashoffset=".5" />
    {[[312, 217], [569, 217], [826, 217], [312, 380], [826, 380], [312, 544], [569, 544], [826, 544]].map(([x, y]) => (
      <rect key={`${x}-${y}`} x={x - 2.5} y={y - 2.5} width="6" height="6" rx="1" fill="#fff" stroke="#000" />
    ))}
    <text x="568" y="246" textAnchor="middle" fontSize="17" fontWeight="700">Chart Title</text>
    {[20, 40, 60, 80].map((v) => (
      <line key={v} x1="391" x2="684" y1={py(v)} y2={py(v)} stroke="#e0e0e0" strokeWidth="2" />
    ))}
    {[0, 20, 40, 60, 80].map((v) => (
      <g key={v}>
        <line x1="385" x2="391" y1={py(v)} y2={py(v)} stroke="#000" strokeWidth="2" />
        <text x="381" y={py(v) + 4} textAnchor="end" fontSize="16">{v}</text>
      </g>
    ))}
    {[390, 432, 474, 516, 558, 600, 642, 684].map((x) => (
      <line key={x} x1={x + 0.5} x2={x + 0.5} y1="453" y2="457" stroke="#000" strokeWidth="2" />
    ))}
    <path d="M390.500 263v191M390 453.500h295" stroke="#111" strokeWidth="2" fill="none" />
    <polyline points={toPoints(seriesA)} fill="none" stroke="#5c9cf5" strokeWidth="1.200" />
    <polyline points={toPoints(seriesB)} fill="none" stroke="#fdbb55" strokeWidth="1.200" />
    {months.map((m, i) => (
      <text key={i} x={px(i)} y={i % 2 ? 487 : 471} textAnchor="middle" fontSize="12">{m}</text>
    ))}
    <path d="M415 495v7h24M507 502h25v-7M541 495v7h24M633 502h25v-7" fill="none" stroke="#000" strokeWidth="2" />
    <text x="473" y="508" textAnchor="middle" fontSize="12">Year Mth A</text>
    <text x="599" y="508" textAnchor="middle" fontSize="12">Year Mth B</text>
    <text x="537" y="524" textAnchor="middle" fontSize="13">Axis Title</text>
    <text transform="translate(349 358) rotate(-90)" textAnchor="middle" fontSize="13">Axis Title</text>
    <rect x="695.500" y="259.500" width="116" height="54" fill="none" stroke="#000" strokeDasharray="2 2" strokeDashoffset=".5" />
    {[[695, 259], [811, 259], [695, 313], [811, 313]].map(([x, y]) => (
      <circle key={`${x}-${y}`} cx={x + 0.5} cy={y + 0.5} r="3" fill="#fff" stroke="#000" />
    ))}
    <path d="M709 276.500h26" stroke="#3e8cf0" strokeWidth="1.500" />
    <path d="M709 293.500h26" stroke="#fdb040" strokeWidth="1.500" />
    <text x="740" y="281" fontSize="13">Name A</text>
    <text x="740" y="298" fontSize="13">Name B</text>
    <MoveGlyph x={329.5} y={219.5} />
    <MoveGlyph x={709.5} y={259.5} />
  </ChartSvg>
);

/* ---------- chart data panel ---------- */

const DataPanel = styled.section`
  position: relative;
  width: 266px;
  border: 1px solid #6b6b6b;
  background: #f0f0f0;
`;
const DataPanelTitle = styled.h3`
  margin: 0;
  height: 26px;
  padding-left: 8px;
  font-size: 14px;
  line-height: 26px;
  background: #d6e3f1;
`;
const DataPanelTools = styled.div`
  height: 26px;
  display: flex;
  align-items: center;
  gap: 7px;
  padding: 0 0 2px 3px;
  background: linear-gradient(#fff, #f0f0f0);
`;
const GroupHeader = styled.div`
  height: 32px;
  display: flex;
  align-items: center;
  gap: 8px;
  padding: 0 8px;
  & > span { flex: 1; }
`;
const GroupList = styled.ul<{ $height: number }>`
  height: ${(p) => p.$height}px;
  margin: 0 4px 3px;
  padding: 2px;
  border: 1px solid #82868e;
  background: #fff;
  display: flex;
  flex-direction: column;
  gap: 1px;
`;
const GroupItem = styled.li<{ $indent?: boolean }>`
  height: 19px;
  margin-left: ${(p) => (p.$indent ? 18 : 0)}px;
  padding-left: ${(p) => (p.$indent ? 4 : 1)}px;
  display: flex;
  align-items: center;
  border: 1px solid #b0b0b0;
  background: #f0f0f0;
  & > span { flex: 1; line-height: 17px; }
`;
const ItemIcon = styled.i<{ $gap: number }>`margin-right: ${(p) => p.$gap}px;`;
const GroupDrop = styled.button`
  width: 21px;
  padding-right: 3px;
  align-self: stretch;
  display: grid;
  place-items: center;
  border-left: 1px solid #b0b0b0;
`;
type Group = { title: string; icon: string; height: number; items: { text: string; icon?: string }[] };
const groups: Group[] = [
  { title: "Values", icon: "sigma", height: 125, items: [{ text: "Sales", icon: "lineChart" }, { text: "[Sum(Sales)]" }] },
  { title: "Category Groups", icon: "categories", height: 65, items: [{ text: "YearMth", icon: "bracket" }, { text: "Monthee", icon: "bracket" }] },
  { title: "Series Groups", icon: "series", height: 65, items: [{ text: "Name", icon: "bracket" }] },
];

/* ---------- grouping pane ---------- */

const Splitter = styled.div`
  height: 5px;
  flex: none;
  background: #2a3a57;
`;
const GroupingPane = styled.div`
  height: 196px;
  flex: none;
  display: grid;
  grid-template-columns: 1fr 1fr;
`;
const GroupingColumn = styled.section`
  & + & > div { border-left: 2px solid #dee1e9; }
`;
const GroupingHeader = styled.header`
  height: 42px;
  display: flex;
  align-items: flex-start;
  gap: 21px;
  padding: 4px 15px 0 4px;
  background: #dee1e9;
  color: #444;
  & > span { flex: 1; padding-top: 8px; }
`;
const GroupingBody = styled.div`height: 154px;`;
const GroupingMenu = styled.button`padding-top: 16px;`;

/* ---------- solution explorer ---------- */

const SolutionTree = styled.ul`padding-top: 2px;`;
const SolutionRow = styled.li<{ $indent: number; $root?: boolean }>`
  height: 22px;
  display: flex;
  align-items: center;
  padding-left: ${(p) => p.$indent}px;
  font-weight: ${(p) => (p.$root ? 700 : 400)};
`;
const Arrow = styled.span<{ $open?: boolean }>`
  width: 8px;
  margin-right: 12px;
  &::before {
    content: "";
    display: block;
    width: 7px;
    height: 7px;
    background: ${(p) => (p.$open ? "linear-gradient(135deg, transparent 50%, #333 50%)" : "transparent")};
  }
`;
const NodeLabel = styled.span<{ $selected?: boolean }>`
  display: flex;
  align-items: center;
  gap: 5px;
  padding: 0 4px 0 2px;
  border: 1px solid ${(p) => (p.$selected ? "#dadada" : "transparent")};
  background: ${(p) => (p.$selected ? "#f5f5f5" : "transparent")};
  white-space: nowrap;
`;

/* ---------- properties ---------- */

const ObjectPicker = styled.div`
  position: relative;
  height: 33px;
  flex: none;
  padding: 3px 2px 2px 1px;
  background: #dee1e9;
`;
const PickerButton = styled.button`
  width: 100%;
  height: 28px;
  display: flex;
  align-items: center;
  gap: 5px;
  padding: 0 1px 0 4px;
  background: #fff;
  & > span:last-child { margin-left: auto; }
`;
const PickerArrow = styled.span`
  width: 12px;
  height: 26px;
  display: grid;
  place-items: center;
  background: #f0f0f0;
`;
const PropertyBar = styled(PanelBar)`padding-left: 3px;`;
const PropertyArea = styled.div`
  flex: 1;
  min-height: 0;
  display: flex;
  overflow: hidden;
  border: 1px solid #9d9d9d;
  background: #f0f0f0;
`;
const PropertyView = styled.div`
  flex: 1;
  min-width: 0;
  overflow: hidden;
`;
const PropertyTable = styled.table`
  width: 100%;
  table-layout: fixed;
  border-collapse: collapse;
  & td, & th {
    height: 23px;
    padding: 0;
    text-align: left;
    font-weight: 400;
    white-space: nowrap;
    line-height: 20px;
  }
`;
const Gutter = styled.td`width: 21px;`;
const PropertyName = styled.th<{ $selected?: boolean }>`
  && { padding: 0 2px 0 5px; }
  border: solid #f0f0f0;
  border-width: 0 1px 1px 0;
  background: ${(p) => (p.$selected ? "#f0f0f0" : "#fff")};
`;
const Clip = styled.span`
  display: block;
  overflow: hidden;
`;
const PropertyValue = styled.td`
  background: #fff;
  border-bottom: 1px solid #f0f0f0;
`;
const ValueBox = styled.span`
  display: flex;
  align-items: center;
  gap: 8px;
  padding-left: 1px;
`;
const PlainValue = styled.span`padding-left: 3px;`;
const Swatch = styled.span<{ $black?: boolean }>`
  width: 20px;
  height: 20px;
  border: 1px solid #000;
  background: ${(p) => (p.$black ? "#000" : "#fff")};
`;
const Category = styled.th`
  && { padding-left: 5px; font-weight: 700; color: #a5afbf; }
`;
const GutterArrow = styled(Arrow)`
  display: block;
  margin: 0 0 0 8px;
`;
const HollowArrow = styled.svg`margin-left: 9px;`;
const Description = styled.div`
  height: 59px;
  flex: none;
  margin-top: 3px;
  padding: 2px 6px;
  border: 1px solid #9d9d9d;
  background: #dee1e9;
  & > strong, & > span { display: block; line-height: 22px; }
`;
const PropertiesBody = styled.div`
  flex: 1;
  min-height: 0;
  display: flex;
  flex-direction: column;
  background: #dee1e9;
`;
type Prop = { name: string; value: string; swatch?: "white" | "black"; selected?: boolean; nested?: boolean };
const props: Prop[] = [
  { name: "AutoFitTextDisabled", value: "False" },
  { name: "BackgroundColor", value: "No Color", swatch: "white", selected: true },
  { name: "BackgroundGradientEndColor", value: "White", swatch: "white" },
  { name: "BackgroundGradientType", value: "None", swatch: "white" },
  { name: "BackgroundIm", value: "", nested: true },
  { name: "BackgroundPatternType", value: "Default", swatch: "white" },
  { name: "BorderColor", value: "Black", swatch: "black" },
  { name: "BorderStyle", value: "Default", swatch: "white" },
  { name: "BorderWidth", value: "1pt", swatch: "white" },
];

/* ---------- status and taskbar ---------- */

const Status = styled.footer`
  height: 30px;
  display: flex;
  align-items: center;
  padding-left: 5px;
  color: #fff;
  background: #293955;
`;
const Taskbar = styled.footer`
  height: 48px;
  display: flex;
  align-items: center;
  background:
    radial-gradient(ellipse 200px 14px at 12% 80%, #8b8c8755, transparent),
    radial-gradient(ellipse 300px 12px at 30% 75%, #8e908c66, transparent),
    radial-gradient(ellipse 360px 16px at 60% 30%, #82868688, transparent),
    radial-gradient(ellipse 260px 10px at 78% 80%, #84868266, transparent),
    linear-gradient(#5f6468, #6e7172 45%, #636768);
`;
const TaskButton = styled.button<{ $open?: boolean; $active?: boolean }>`
  width: 66px;
  height: 46px;
  margin-right: 4px;
  display: grid;
  place-items: center;
  border: 1px solid transparent;
  ${(p) => p.$open && css`background: #a3a5a255; border-color: #a9abab;`}
  ${(p) => p.$active && css`background: #b9bab9aa; border-color: #f4f4f4;`}
`;
const Tray = styled.div`
  margin-left: auto;
  padding: 2px 22px 0 0;
  display: flex;
  align-items: center;
  gap: 11px;
`;
const TrayArrow = styled.svg`margin-right: 5px;`;
const Clock = styled.time`
  margin-left: 5px;
  color: #fff;
  text-align: center;
  line-height: 22px;
  & > span { display: block; }
`;

const sqlTools = (
  <>
    <path d="M4 2v15q5 3 10 0V2z" fill="#e8ad22" />
    <path d="M6 3v14" stroke="#fbe08a" strokeWidth="3" />
    <ellipse cx="9" cy="2.500" rx="5" ry="2" fill="#fbe39a" />
    <path d="M21 2h14v14M4 22v12h14" fill="none" stroke="#136c14" strokeWidth="2" strokeDasharray="2 2" />
    <path d="M20 38 34 22" stroke="#d99a20" strokeWidth="3.500" strokeLinecap="round" />
    <path d="M18 21 36 38" stroke="#eef1f6" strokeWidth="3.500" strokeLinecap="round" />
    <path d="M18 21 36 38" stroke="#7d8ba5" strokeWidth="1" />
    <path d="M29 19q7-4 10 7l3 1-1 3-5-2-3-5-4 3z" fill="#dfe6f1" stroke="#73829c" />
    <path d="M14 20q2-3 6 0l1 5-5 1z" fill="#dfe6f1" stroke="#73829c" />
  </>
);
const appTile = (letter: string, color: string) => (
  <>
    <path d="M2 4 23 0v38L2 34z" fill={color} />
    <text x="12.500" y="26" textAnchor="middle" fontSize="19" fontWeight="700" fill="#fff" fontFamily="Open Sans, sans-serif">{letter}</text>
  </>
);

type App = { label: string; open?: boolean; active?: boolean; art: React.ReactNode };
const apps: App[] = [
  {
    label: "Start",
    art: (
      <>
        <circle cx="19" cy="19" r="21" fill="#174f66" stroke="#a9c6d2" strokeWidth="1.500" />
        <path d="M12 32V28L7 23Q2 17 6 13q1-4 5-4 3-4 8-4t8 4q4 0 5 4 4 4-1 10l-5 5v4z" fill="#3c8795" stroke="#f6cf86" strokeWidth="1.800" />
        <path d="M19 30V9M17 29 13 11M21 29 25 11M15 27 8 16M23 27 30 16" stroke="#1c5a6b" />
      </>
    ),
  },
  {
    label: "File Explorer",
    open: true,
    art: (
      <>
        <path d="M3 9 6 2h9v4h9V4h12v30H3z" fill="#ecd277" />
        <path d="M6 3h4v3H6z" fill="#3aa648" />
        <path d="M17 6h4v3h-4z" fill="#d9412d" />
        <path d="M26 5h5v3h-5z" fill="#3e8fe0" />
        <path d="M1 11h38v25q-19 3-38 0z" fill="#f8e69c" />
        <path d="M7 38V25q13-4 26 0v13h-6v-7H13v7z" fill="#84cdee" stroke="#4b9cc4" />
      </>
    ),
  },
  {
    label: "Media Player",
    art: (
      <>
        <path d="M9 4h28v30l-5 3V9z" fill="#6fb6dd" stroke="#3b85b0" />
        <path d="M3 5h28v29H3z" fill="#8ccbea" stroke="#3b85b0" />
        <circle cx="17" cy="20" r="12" fill="#f47c20" />
        <path d="M12.500 13v14L24 20z" fill="#fff" />
      </>
    ),
  },
  {
    label: "Chrome",
    open: true,
    art: (
      <>
        <circle cx="20" cy="20" r="17.500" fill="#e2382c" />
        <path d="M4.800 11.300A17.500 17.500 0 0 0 19 37.500L27.500 24 20 20l-8 4z" fill="#3fa648" />
        <path d="M19 37.500A17.500 17.500 0 0 0 35.500 12H20l8 12z" fill="#fbcb2d" />
        <circle cx="20" cy="20" r="8" fill="#fff" />
        <circle cx="20" cy="20" r="6.500" fill="#3577c9" />
      </>
    ),
  },
  {
    label: "Remote Desktop",
    art: (
      <>
        <path d="M3 2 33 5v20L5 23z" fill="#1440c8" stroke="#cfd6e2" strokeWidth="2" />
        <path d="M20 4 33 5v20l-5-1z" fill="#5f8bf2" />
        <path d="M10 30q10-5 18 1l-3 4q-8 2-15-1z" fill="#dfe3e8" />
        <circle cx="30" cy="29" r="9" fill="#eceeee" stroke="#a4a8a8" />
        <path d="M25 30l4 2-3 4M35 23l-4 3 4 3" fill="none" stroke="#3aa13c" strokeWidth="2" />
      </>
    ),
  },
  { label: "SQL Server Data Tools", open: true, art: sqlTools },
  {
    label: "Internet Explorer",
    art: (
      <>
        <path d="M20 6a15 15 0 1 0 14 20h-8a7 7 0 0 1-13-4h22A15 15 0 0 0 20 6zm-7 11a7 7 0 0 1 14 0z" fill="#41b6f0" stroke="#1f86c4" strokeWidth=".8" />
        <path d="M4 37Q-1 30 10 17 24 2 35 3q4 3-1 11 3-7-2-8Q22 6 12 18 3 30 7 36z" fill="#fbc92f" />
      </>
    ),
  },
  {
    label: "Notepad",
    art: (
      <>
        <path d="M30 5 39 6 36 36 29 38z" fill="#eef1f1" stroke="#9da4a6" strokeWidth=".6" />
        <path d="M15 4h20L28 34 1 30z" fill="#5fb3c0" stroke="#3c8896" />
        <path d="M16 6h9L13 30 3 28z" fill="#a9dde3" />
        <path d="M1 30 28 34 29 38 4 34z" fill="#f5f7f7" stroke="#9da4a6" strokeWidth=".6" />
        <path d="M15 3h22" stroke="#dfe3e5" strokeWidth="4" strokeDasharray="2 1" />
      </>
    ),
  },
  {
    label: "Toolbox",
    art: (
      <>
        <path d="M3 0h30v26H3z" fill="#fff" stroke="#8f97a5" />
        <path d="M3 0h30v4H3z" fill="#aeb6c6" />
        <path d="M5 7h4v12H5z" fill="#d6dae2" />
        <path d="M13 20q8-9 14 1" fill="none" stroke="#222" strokeWidth="2" />
        <path d="M3 21 30 19l9 5v10L28 38 3 33z" fill="#d3262a" />
        <path d="M3 21 28 25v13" fill="none" stroke="#8e1013" />
        <path d="M10 24v5M23 26v5" stroke="#ddd" strokeWidth="2" />
      </>
    ),
  },
  {
    label: "Lync",
    open: true,
    art: (
      <>
        <path d="M25 8l6 5-6 5M25 16q6-6 12 0 3 6-4 9h-8" fill="none" stroke="#0b72c6" strokeWidth="6" />
        <path d="M25 8l6 5-6 5M25 16q6-6 12 0 3 6-4 9h-8" fill="none" stroke="#fff" strokeWidth="3" />
        {appTile("L", "#0b72c6")}
        <path d="M27 26h13v13H27z" fill="#5bd750" />
      </>
    ),
  },
  {
    label: "Outlook",
    open: true,
    art: (
      <g transform="translate(-2 0)">
        <path d="M22 8h16v21H22z" fill="#fff" stroke="#0b72c6" strokeWidth="2" />
        <path d="M22 10l7 8 9-9" fill="none" stroke="#0b72c6" strokeWidth="2" />
        {appTile("O", "#0b72c6")}
      </g>
    ),
  },
  { label: "SQL Server", open: true, art: sqlTools },
  {
    label: "Visual Studio",
    open: true,
    active: true,
    art: (
      <g fill="none" strokeWidth="6">
        <path d="M20 20Q13 12 7 14q-6 3-4 9 4 7 11 2l6-5" stroke="#4fb0dc" />
        <path d="M14 25 22 18q6-7 12-5 6 4 3 10-4 6-11 2l-6-5" stroke="#5b2d91" />
        <path d="M12 27 20 20l5-4" stroke="#4c62b8" />
      </g>
    ),
  },
  {
    label: "Word",
    open: true,
    art: (
      <>
        <path d="M20 6h17v27H20z" fill="#fff" stroke="#2b579a" strokeWidth="2" />
        <path d="M24 11h10M24 15h10M24 19h10M24 23h10M24 27h10" stroke="#2b579a" strokeWidth="2" />
        {appTile("W", "#2b579a")}
      </>
    ),
  },
];

const menus = ["File", "Edit", "View", "Project", "Build", "Debug", "Team", "SQL", "Data", "Format", "Report", "Architecture", "Test", "Tools", "Analyze", "Window", "Help"];

export default function App() {
  return (
    <Window>
      <Global />
      <TitleBar>
        <svg width="20" height="20" viewBox="0 0 40 40" aria-hidden="true">
          <g fill="none" strokeWidth="6">
            <path d="M20 20Q13 12 7 14q-6 3-4 9 4 7 11 2l6-5" stroke="#2d6fc4" />
            <path d="M14 25 22 18q6-7 12-5 6 4 3 10-4 6-11 2l-6-5" stroke="#4a2792" />
          </g>
        </svg>
        <WindowTitle>CorporateDashboard - Microsoft Visual Studio (Administrator)</WindowTitle>
        <WindowButtons>
          <WindowButton aria-label="Minimize"><svg width="14" height="14"><path d="M0 12h14" stroke="#222" strokeWidth="2" /></svg></WindowButton>
          <WindowButton aria-label="Restore">
            <svg width="16" height="16"><path d="M1.500 4.500h11v10h-11zM1 5.500h12M3.500 1.500h12v10" fill="none" stroke="#222" strokeWidth="1.500" /></svg>
          </WindowButton>
          <WindowButton $close aria-label="Close window">
            <svg width="12" height="12"><path d="M1.500 1.500l9 9M10.500 1.500l-9 9" stroke="#fff" strokeWidth="2.400" /></svg>
          </WindowButton>
        </WindowButtons>
      </TitleBar>

      <MenuBar>{menus.map((m) => <MenuItem key={m}>{m}</MenuItem>)}</MenuBar>

      <ToolStrip>
        <ToolRow>
          <Bar>
            <Grip />
            <Tools names={["newItem"]} /><Drop label="New item options" />
            <Tools names={["save", "saveAll"]} />
            <Separator />
            <Tools names={["cut", "copy", "paste"]} />
            <Separator />
            <Tools names={["undo"]} /><Drop label="Undo history" />
            <Tools names={["redo"]} /><Drop label="Redo history" dim />
            <Separator />
            <Tools names={["play"]} />
            <Separator />
            <Combo label="Solution configuration" value="Debug" width={112} tint />
            <Separator />
            <Tools names={["find", "properties", "team", "tools", "go", "blocks", "command"]} />
            <Drop label="Other windows" />
            <More />
          </Bar>
        </ToolRow>
        <ToolRow>
          <Bar>
            <Grip />
            <Combo label="Border style" value="Solid" width={106} />
            <Combo label="Border width" value="1 pt" width={81} />
            <Combo label="Border color" value="Black" width={87} />
            <Tools names={["border"]} /><Drop label="Borders" />
            <More />
          </Bar>
          <Bar>
            <Grip />
            <Tools names={["pageHeader", "pageFooter", "properties"]} />
            <ToolButton $on aria-label="Grouping"><Icon name="grouping" /></ToolButton>
            <Tools names={["ruler"]} />
            <Combo label="Zoom" value="100%" width={168} />
            <More />
          </Bar>
          <Bar>
            <Grip />
            <Combo label="Font" value="Arial" width={168} />
            <Combo label="Font size" value="8pt" width={56} />
            <ToolButton aria-label="Bold"><Letter $kind="b">B</Letter></ToolButton>
            <ToolButton aria-label="Italic"><Letter $kind="i">I</Letter></ToolButton>
            <ToolButton aria-label="Underline"><Letter $kind="u">U</Letter></ToolButton>
            <Tools names={["foreColor", "backColor", "alignLeft", "alignCenter", "alignRight", "numbered", "bullets", "outdent", "indent"]} />
            <More />
          </Bar>
          <Bar>
            <Grip />
            <Tools names={["grid"]} />
            <Separator />
            <Tools names={["lefts", "centers", "rights"]} />
            <Separator />
            <Tools names={["tops", "middles", "bottoms"]} />
            <Separator />
            <Tools names={["sameWidth", "sameHeight", "sameSize", "sizeGrid"]} />
            <Separator />
            <Tools names={["hEqual", "hMore", "hLess", "hNone"]} />
            <Separator />
            <Tools names={["vEqual", "vMore", "vLess", "vNone"]} />
            <More />
          </Bar>
        </ToolRow>
      </ToolStrip>

      <Dock>
        <SideTabs>
          <SideTab $height={131}><Icon name="servers" /><span>Server Explorer</span></SideTab>
          <SideTab $height={87}><Icon name="tools" /><span>Toolbox</span></SideTab>
        </SideTabs>

        <Column>
          <Panel>
            <Header title="Report Data" />
            <ReportBar $height={27}>
              <TextButton>New<Triangle $size={3} /></TextButton>
              <TextButton>Edit...</TextButton>
              <TextButton aria-label="Delete"><Icon name="delete" size={16} /></TextButton>
              <TextButton aria-label="Move up"><Icon name="up" size={16} /></TextButton>
              <TextButton aria-label="Move down"><Icon name="down" size={16} /></TextButton>
            </ReportBar>
            <PanelBody>
              <DataTree>
                {dataNodes.map((n) => (
                  <DataRow key={n.text} $indent={n.indent} $selected={n.selected}>
                    <Expander $state={n.state} />
                    <Icon name={n.icon} size={14} />
                    {n.text}
                  </DataRow>
                ))}
              </DataTree>
            </PanelBody>
            <BottomTabs>
              <BottomTab $active $width={118}><Icon name="reportData" />Report Data</BottomTab>
              <BottomTab><Icon name="ssis" />SSIS Toolbox</BottomTab>
            </BottomTabs>
          </Panel>
        </Column>

        <Column>
          <TabStrip>
            <DocumentTab>
              SQLShackDashboard.rdl [Design]*
              <TabClose aria-label="Close document"><Icon name="close" size={13} /></TabClose>
            </DocumentTab>
            <StripMenu aria-label="Open documents"><Triangle $color="#ced4df" $size={5} /></StripMenu>
          </TabStrip>
          <DocumentPane>
            <ViewTabs>
              <ViewTab $active><Icon name="design" size={18} />Design</ViewTab>
              <ViewTab><Icon name="preview" size={18} />Preview</ViewTab>
            </ViewTabs>
            <CanvasRow>
              <Canvas>
                <ReportSurface>
                  <Chart />
                  <DataPanel>
                    <DataPanelTitle>Chart Data</DataPanelTitle>
                    <DataPanelTools>
                      <button aria-label="Series properties"><Icon name="propertiesGray" size={16} /></button>
                      <button aria-label="Move item down"><Icon name="downFat" size={16} /></button>
                      <button aria-label="Move item up"><Icon name="upFat" size={16} /></button>
                      <button aria-label="Remove item"><Icon name="deleteGray" size={14} /></button>
                    </DataPanelTools>
                    {groups.map((g) => (
                      <React.Fragment key={g.title}>
                        <GroupHeader>
                          <Icon name={g.icon} size={16} />
                          <span>{g.title}</span>
                          <button aria-label={`Add to ${g.title}`}><Icon name="add" size={16} /></button>
                        </GroupHeader>
                        <GroupList $height={g.height}>
                          {g.items.map((it) => (
                            <GroupItem key={it.text} $indent={!it.icon}>
                              {it.icon && (
                                <ItemIcon $gap={it.icon === "bracket" ? 3 : 6}>
                                  <Icon name={it.icon} size={it.icon === "bracket" ? 10 : 15} />
                                </ItemIcon>
                              )}
                              <span>{it.text}</span>
                              <GroupDrop aria-label={`${it.text} options`}><Triangle $color="#000" /></GroupDrop>
                            </GroupItem>
                          ))}
                        </GroupList>
                      </React.Fragment>
                    ))}
                  </DataPanel>
                </ReportSurface>
              </Canvas>
              <CanvasScroll $width={22}>
                <Chevron dir="up" />
                <Thumb $share={93} />
                <Track $share={7} />
                <Chevron dir="down" />
              </CanvasScroll>
            </CanvasRow>
            <ScrollRow>
              <Chevron dir="left" />
              <Thumb $share={97} />
              <Track $share={3} />
              <Chevron dir="right" />
            </ScrollRow>
            <Splitter />
            <GroupingPane>
              <GroupingColumn>
                <GroupingHeader><Icon name="rowGroups" /><span>Row Groups</span></GroupingHeader>
                <GroupingBody />
              </GroupingColumn>
              <GroupingColumn>
                <GroupingHeader>
                  <Icon name="columnGroups" /><span>Column Groups</span>
                  <GroupingMenu aria-label="Grouping options"><Triangle $color="#555" $size={5} /></GroupingMenu>
                </GroupingHeader>
                <GroupingBody />
              </GroupingColumn>
            </GroupingPane>
          </DocumentPane>
        </Column>

        <Column>
          <Panel>
            <Header title="Solution Explorer" />
            <PanelBar $height={33}>
              <Tools names={["showAll"]} /><Separator /><Tools names={["refresh"]} />
            </PanelBar>
            <PanelBody>
              <SolutionTree>
                <SolutionRow $indent={8} $root><NodeLabel><Icon name="solution" size={16} />CorporateDashboard</NodeLabel></SolutionRow>
                <SolutionRow $indent={10}><Arrow $open /><Icon name="folderOpen" size={16} /><NodeLabel>Shared Data Sources</NodeLabel></SolutionRow>
                <SolutionRow $indent={46}><NodeLabel><Icon name="dataSource" size={16} />dashboard1.rds</NodeLabel></SolutionRow>
                <SolutionRow $indent={10}><Arrow /><Icon name="folderClosed" size={16} /><NodeLabel>Shared Datasets</NodeLabel></SolutionRow>
                <SolutionRow $indent={10}><Arrow $open /><Icon name="folderOpen" size={16} /><NodeLabel>Reports</NodeLabel></SolutionRow>
                <SolutionRow $indent={46}><NodeLabel $selected><Icon name="report" size={16} />SQLShackDashboard.rdl</NodeLabel></SolutionRow>
              </SolutionTree>
            </PanelBody>
            <BottomTabs>
              <BottomTab $active $width={85}><Icon name="find" />Solut...</BottomTab>
              <BottomTab $width={86}><Icon name="team" />Tea...</BottomTab>
              <BottomTab $width={85}><Icon name="classView" />Class...</BottomTab>
            </BottomTabs>
          </Panel>
          <Panel $height={362}>
            <Header title="Properties" />
            <PropertiesBody>
              <ObjectPicker>
                <PickerButton aria-label="Selected object">
                  <strong>Default</strong><span>Chart Legend</span>
                  <PickerArrow><Triangle $color="#000" $size={3} /></PickerArrow>
                </PickerButton>
              </ObjectPicker>
              <PropertyBar $height={26}>
                <ToolButton $compact $on aria-label="Categorized"><Icon name="categorized" size={17} /></ToolButton>
                <ToolButton $compact aria-label="Alphabetical"><Icon name="sortAz" size={17} /></ToolButton>
                <Separator />
                <ToolButton $compact aria-label="Property pages"><Icon name="propertyPages" size={17} /></ToolButton>
              </PropertyBar>
              <PropertyArea>
                <PropertyView>
                  <PropertyTable>
                    <colgroup><col width="21" /><col width="101" /><col /></colgroup>
                    <tbody>
                      <tr><Gutter><GutterArrow $open /></Gutter><Category colSpan={2}>Appearance</Category></tr>
                      {props.map((p) => (
                        <tr key={p.name}>
                          <Gutter>
                            {p.nested && <HollowArrow width="6" height="8"><path d="M.500.500 5 4 .500 7.500z" fill="#fff" stroke="#999" /></HollowArrow>}
                          </Gutter>
                          <PropertyName $selected={p.selected} scope="row"><Clip>{p.name}</Clip></PropertyName>
                          <PropertyValue>
                            {p.swatch ? <ValueBox><Swatch $black={p.swatch === "black"} />{p.value}</ValueBox> : <PlainValue>{p.value}</PlainValue>}
                          </PropertyValue>
                        </tr>
                      ))}
                    </tbody>
                  </PropertyTable>
                </PropertyView>
                <ScrollColumn $width={21}>
                  <Chevron dir="up" />
                  <Thumb $share={28} />
                  <Track $share={72} />
                  <Chevron dir="down" />
                </ScrollColumn>
              </PropertyArea>
              <Description><strong>BackgroundColor</strong><span>Legend background color.</span></Description>
            </PropertiesBody>
          </Panel>
        </Column>
      </Dock>

      <Status>Ready</Status>

      <Taskbar>
        {apps.map((a) => (
          <TaskButton key={a.label} aria-label={a.label} $open={a.open} $active={a.active}>
            <svg width="40" height="40" viewBox="-1 -1 42 42" overflow="visible">{a.art}</svg>
          </TaskButton>
        ))}
        <Tray>
          <TrayArrow width="10" height="6"><path d="M5 0 10 6H0z" fill="#e6e8ee" /></TrayArrow>
          <svg width="20" height="20" viewBox="0 0 20 20">
            <path d="M2 1v4M5 1v4M1 5.500h5v4H1zM3.500 9v10" stroke="#fff" strokeWidth="1.500" fill="#fff" />
            <rect x="9" y="2.500" width="8" height="16" fill="#5a5e60" stroke="#fff" strokeWidth="1.500" />
            <path d="M11 1h4v1.500h-4zM11 5h4v12h-4z" fill="#fff" />
          </svg>
          <svg width="19" height="20" viewBox="0 0 19 20">
            <path d="M1.500 1v18" stroke="#fff" strokeWidth="2" />
            <path d="M3 2q4-1 7 2 3 2 9 1-3 7-8 6-4-3-8-1z" fill="#fff" />
          </svg>
          <svg width="17" height="18"><path d="M1 14h2v4H1zM4 12h2v6H4zM7 9h2v9H7zM10 6h2v12h-2zM13 2h2.500v16H13z" fill="#fff" /></svg>
          <svg width="20" height="20" viewBox="0 0 20 20">
            <path d="M1 6h3l5-5v18l-5-5H1z" fill="#fff" />
            <circle cx="14" cy="14" r="4.200" fill="#fff" stroke="#e01818" strokeWidth="1.800" />
            <path d="M11.200 11.200l5.600 5.600" stroke="#e01818" strokeWidth="1.800" />
          </svg>
          <Clock><span>9:39 AM</span><span>12/20/2014</span></Clock>
        </Tray>
      </Taskbar>
    </Window>
  );
}
